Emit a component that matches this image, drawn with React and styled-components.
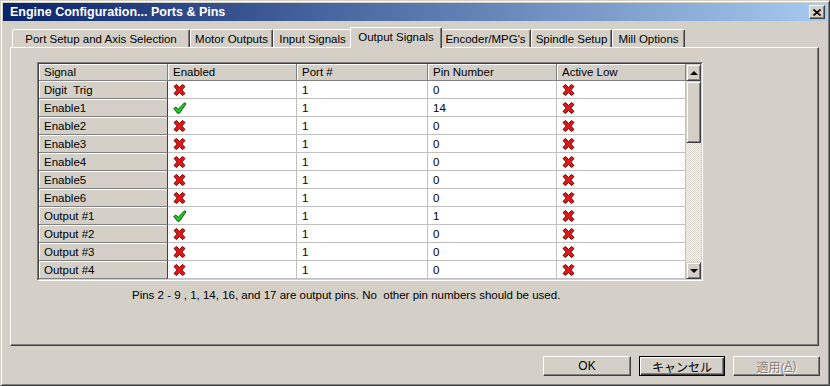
import React from 'react';
import styled, { createGlobalStyle, css } from 'styled-components';

const GlobalStyle = createGlobalStyle`
  html, body { margin: 0; padding: 0; background: #d4d0c8; }
  body {
    font-family: "Liberation Sans", "Noto Sans CJK JP", sans-serif;
    font-size: 11.5px;
    color: #000;
  }
  * { box-sizing: border-box; }
`;

const Window = styled.div`
  width: 830px;
  height: 386px;
  background: #d4d0c8;
  border: 1px solid;
  border-color: #d4d0c8 #404040 #404040 #d4d0c8;
  box-shadow: inset 1px 1px #fff, inset -1px -1px #808080;
  padding: 2px;
  display: flex;
  flex-direction: column;
`;

const TitleBar = styled.div`
  height: 18px;
  flex: none;
  background: linear-gradient(to right, #0a246a, #a6caf0);
  color: #fff;
  font-weight: bold;
  font-size: 12.5px;
  display: flex;
  align-items: center;
  justify-content: space-between;
  padding: 0 2px 0 7px;
`;

const CloseButton = styled.div`
  width: 16px;
  height: 14px;
  background: #d4d0c8;
  border: 1px solid;
  border-color: #fff #404040 #404040 #fff;
  box-shadow: inset -1px -1px #808080;
  display: flex;
  align-items: center;
  justify-content: center;
`;

const Body = styled.div`
  flex: 1;
  display: flex;
  flex-direction: column;
  padding: 6px 8px 0 7px;
`;

const TabStrip = styled.div`
  height: 20px;
  display: flex;
  align-items: flex-end;
  padding-left: 2px;
`;

const Tab = styled.div`
  position: relative;
  flex: none;
  width: ${p => (p.$active ? p.$w + 4 : p.$w)}px;
  height: ${p => (p.$active ? 21 : 18)}px;
  margin: ${p => (p.$active ? '0 -2px -1px' : '0')};
  z-index: ${p => (p.$active ? 2 : 1)};
  background: #d4d0c8;
  border-top: 1px solid #fff;
  border-left: 1px solid #fff;
  border-right: 1px solid #404040;
  box-shadow: inset -1px 0 #808080;
  border-top-left-radius: 2px;
  border-top-right-radius: 2px;
  display: flex;
  align-items: center;
  justify-content: center;
  padding-bottom: ${p => (p.$active ? 2 : 0)}px;
  white-space: nowrap;
`;

const Panel = styled.div`
  height: 299px;
  flex: none;
  border: 1px solid;
  border-color: #fff #404040 #404040 #fff;
  box-shadow: inset -1px -1px #808080;
  padding: 14px 0 0 26px;
  display: flex;
  flex-direction: column;
`;

const GridFrame = styled.div`
  width: 666px;
  height: 219px;
  border: 1px solid;
  border-color: #808080 #fff #fff #808080;
`;

const GridInner = styled.div`
  height: 100%;
  border: 1px solid;
  border-color: #404040 #d4d0c8 #d4d0c8 #404040;
  display: flex;
  background: #fff;
`;

const Table = styled.div`
  display: grid;
  grid-template-columns: 129px 129px 131px 129px 129px;
  grid-template-rows: 17px repeat(11, 18px);
  width: 647px;
  overflow: hidden;
`;

const Cell = styled.div`
  display: flex;
  align-items: center;
  white-space: pre;
  overflow: hidden;
  ${p =>
    p.$kind === 'data'
      ? css`
          background: #fff;
          border-right: 1px solid #c0c0c0;
          border-bottom: 1px solid #c0c0c0;
          padding-left: 5px;
        `
      : css`
          background: #d4d0c8;
          border-right: 1px solid ${p.$kind === 'fixed' ? '#404040' : '#808080'};
          border-bottom: 1px solid #808080;
          box-shadow: inset 1px 1px #fff;
          padding-left: 5px;
        `}
`;

const Scrollbar = styled.div`
  width: 15px;
  flex: none;
  display: flex;
  flex-direction: column;
`;

const raised = css`
  background: #d4d0c8;
  border: 1px solid;
  border-color: #d4d0c8 #404040 #404040 #d4d0c8;
  box-shadow: inset 1px 1px #fff, inset -1px -1px #808080;
`;

const ScrollButton = styled.div`
  ${raised};
  height: 17px;
  flex: none;
  display: flex;
  align-items: center;
  justify-content: center;
`;

const Arrow = styled.div`
  width: 0;
  height: 0;
  border-left: 4px solid transparent;
  border-right: 4px solid transparent;
  ${p =>
    p.$down
      ? css`border-top: 4px solid #000;`
      : css`border-bottom: 4px solid #000;`}
`;

const Thumb = styled.div`
  ${raised};
  height: 62px;
  flex: none;
`;

const Track = styled.div`
  flex: 1;
  background-color: #fff;
  background-image: conic-gradient(#d4d0c8 25%, #fff 0 50%, #d4d0c8 0 75%, #fff 0);
  background-size: 2px 2px;
`;

const Note = styled.div`
  margin: 8px 0 0 95px;
  line-height: 12px;
  white-space: pre;
`;

const ButtonRow = styled.div`
  display: flex;
  justify-content: flex-end;
  gap: 8px;
  margin: 10px -1px 0 0;
`;

const Button = styled.div`
  width: ${p => p.$w}px;
  height: 20px;
  background: #d4d0c8;
  display: flex;
  align-items: center;
  justify-content: center;
  font-size: 12px;
  font-family: "Liberation Sans", "Noto Sans CJK JP", sans-serif;
  ${p =>
    p.$default
      ? css`
          border: 1px solid #000;
          box-shadow: inset 1px 1px #fff, inset -1px -1px #404040, inset -2px -2px #808080;
        `
      : css`
          border: 1px solid;
          border-color: #fff #404040 #404040 #fff;
          box-shadow: inset -1px -1px #808080;
        `}
  ${p =>
    p.$disabled &&
    css`
      color: #808080;
      text-shadow: 1px 1px #fff;
    `}
`;

const CrossIcon = () => (
  <svg width="13" height="12" viewBox="0 0 13 12">
    <polygon
      points="1,2.5 3.5,0.5 6.5,3.5 9.5,0.5 12,2.5 8.8,6 12,9.5 9.5,11.5 6.5,8.5 3.5,11.5 1,9.5 4.2,6"
      fill="#e01818"
      stroke="#7a0000"
      strokeWidth="1"
      strokeLinejoin="round"
    />
  </svg>
);

const CheckIcon = () => (
  <svg width="14" height="12" viewBox="0 0 14 12">
    <polygon
      points="0.8,6.5 3,5 5,7.5 11.5,0.8 13,1.8 6.5,11.2 4.5,11.2"
      fill="#22cc22"
      stroke="#0b5a0b"
      strokeWidth="1"
      strokeLinejoin="round"
    />
  </svg>
);

const CloseGlyph = () => (
  <svg width="8" height="7" viewBox="0 0 8 7">
    <path d="M0.5 0.5 L7.5 6.5 M7.5 0.5 L0.5 6.5" stroke="#000" strokeWidth="1.6" />
  </svg>
);

const tabs = [
  { label: 'Port Setup and Axis Selection', w: 178 },
  { label: 'Motor Outputs', w: 83 },
  { label: 'Input Signals', w: 79 },
  { label: 'Output Signals', w: 88, active: true },
  { label: "Encoder/MPG's", w: 91 },
  { label: 'Spindle Setup', w: 81 },
  { label: 'Mill Options', w: 73 },
];

const rows = [
  ['Digit  Trig', false, '1', '0'],
  ['Enable1', true, '1', '14'],
  ['Enable2', false, '1', '0'],
  ['Enable3', false, '1', '0'],
  ['Enable4', false, '1', '0'],
  ['Enable5', false, '1', '0'],
  ['Enable6', false, '1', '0'],
  ['Output #1', true, '1', '1'],
  ['Output #2', false, '1', '0'],
  ['Output #3', false, '1', '0'],
  ['Output #4', false, '1', '0'],
];

const headers = ['Signal', 'Enabled', 'Port #', 'Pin Number', 'Active Low'];

export default function App() {
  return (
    <>
      <GlobalStyle />
      <Window>
        <TitleBar>
          <span>Engine Configuration... Ports &amp; Pins</span>
          <CloseButton>
            <CloseGlyph />
          </CloseButton>
        </TitleBar>
        <Body>
          <TabStrip>
            {tabs.map(t => (
              <Tab key={t.label} $w={t.w} $active={t.active}>
                {t.label}
              </Tab>
            ))}
          </TabStrip>
          <Panel>
            <GridFrame>
              <GridInner>
                <Table>
                  {headers.map(h => (
                    <Cell key={h} $kind="header">
                      {h}
                    </Cell>
                  ))}
                  {rows.map(([name, enabled, port, pin]) => (
                    <React.Fragment key={name}>
                      <Cell $kind="fixed">{name}</Cell>
                      <Cell $kind="data">{enabled ? <CheckIcon /> : <CrossIcon />}</Cell>
                      <Cell $kind="data">{port}</Cell>
                      <Cell $kind="data">{pin}</Cell>
                      <Cell $kind="data">
                        <CrossIcon />
                      </Cell>
                    </React.Fragment>
                  ))}
                </Table>
                <Scrollbar>
                  <ScrollButton>
                    <Arrow />
                  </ScrollButton>
                  <Thumb />
                  <Track />
                  <ScrollButton>
                    <Arrow $down />
                  </ScrollButton>
                </Scrollbar>
              </GridInner>
            </GridFrame>
            <Note>Pins 2 - 9 , 1, 14, 16, and 17 are output pins. No  other pin numbers should be used.</Note>
          </Panel>
          <ButtonRow>
            <Button $w={88}>OK</Button>
            <Button $w={86} $default>キャンセル</Button>
            <Button $w={87} $disabled>
              適用(<u>A</u>)
            </Button>
          </ButtonRow>
        </Body>
      </Window>
    </>
  );
}
